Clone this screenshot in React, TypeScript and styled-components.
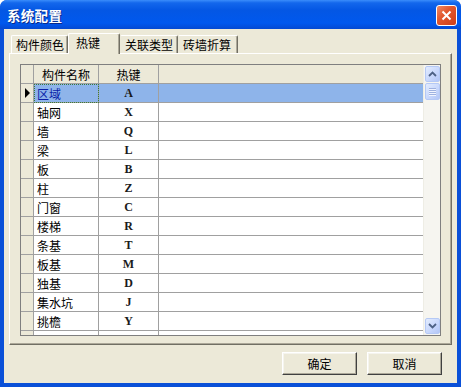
import React from 'react';
import styled, { createGlobalStyle } from 'styled-components';

const GlobalStyle = createGlobalStyle`
  html, body {
    margin: 0;
    padding: 0;
    background: #ffffff;
  }
  body {
    font-family: "Noto Sans CJK SC", "Liberation Sans", sans-serif;
    font-size: 12px;
  }
`;

const Window = styled.div`
  width: 461px;
  height: 387px;
  box-sizing: border-box;
  display: flex;
  flex-direction: column;
  background: #0a50d8;
  border-radius: 7px 7px 0 0;
  overflow: hidden;
`;

const TitleBar = styled.div`
  height: 29px;
  flex: none;
  display: flex;
  align-items: center;
  justify-content: space-between;
  padding: 0 4px 0 7px;
  background: linear-gradient(
    to bottom,
    #3a8dfb 0%,
    #1367ec 10%,
    #0457e4 35%,
    #0058ee 80%,
    #0449d2 100%
  );
`;

const Title = styled.span`
  color: #ffffff;
  font-weight: bold;
  font-size: 13.5px;
  letter-spacing: 0.3px;
  text-shadow: 1px 1px 0 #0a2a8a;
`;

const CloseButton = styled.div`
  width: 21px;
  height: 21px;
  box-sizing: border-box;
  border: 1px solid #ffffff;
  border-radius: 3px;
  background: linear-gradient(135deg, #f08a64 0%, #e2582f 40%, #cf3d17 100%);
  display: flex;
  align-items: center;
  justify-content: center;
  margin-top: 1px;
`;

const Client = styled.div`
  flex: 1;
  margin: 0 4px 4px;
  background: #ece9d8;
  display: flex;
  flex-direction: column;
  padding: 4px 5px 0;
  min-height: 0;
`;

const TabStrip = styled.div`
  height: 20px;
  flex: none;
  display: flex;
  align-items: flex-end;
  padding-left: 2px;
  position: relative;
  z-index: 1;
`;

const Tab = styled.div<{ $active?: boolean; $width: number }>`
  box-sizing: border-box;
  width: ${(p) => p.$width}px;
  height: ${(p) => (p.$active ? '21px' : '18px')};
  margin-bottom: ${(p) => (p.$active ? '-1px' : '0')};
  padding: ${(p) => (p.$active ? '1px 0 0 7px' : '1px 0 0 4px')};
  background: #ece9d8;
  border-top: 1px solid #ffffff;
  border-left: 1px solid ${(p) => (p.$active ? '#ffffff' : '#ece9d8')};
  border-right: 1px solid #716f64;
  box-shadow: inset -1px 0 0 #aca899;
  border-radius: 2px 2px 0 0;
  color: #000000;
  font-size: 12px;
  line-height: 15px;
  white-space: nowrap;
  &:first-child {
    border-left-color: #ffffff;
  }
`;

const Panel = styled.div`
  height: 292px;
  flex: none;
  box-sizing: border-box;
  border-top: 1px solid #ffffff;
  border-left: 1px solid #ffffff;
  border-right: 1px solid #716f64;
  border-bottom: 1px solid #716f64;
  box-shadow: inset -1px -1px 0 #aca899;
  padding: 10px 10px 8px 10px;
  display: flex;
`;

const Grid = styled.div`
  flex: 1;
  box-sizing: border-box;
  border: 1px solid #7f7f7f;
  display: flex;
  background: #ffffff;
  overflow: hidden;
`;

const Table = styled.div`
  flex: 1;
  min-width: 0;
  overflow: hidden;
`;

const Row = styled.div<{ $selected?: boolean }>`
  display: grid;
  grid-template-columns: 13px 65px 60px 1fr;
  height: 19px;
  background: ${(p) => (p.$selected ? '#8eb4ea' : '#ffffff')};
`;

const HeaderRow = styled(Row)`
  background: #ece9d8;
`;

const Cell = styled.div<{ $center?: boolean; $head?: boolean }>`
  box-sizing: border-box;
  border-right: 1px solid #a0a0a0;
  border-bottom: 1px solid #a0a0a0;
  display: flex;
  align-items: center;
  justify-content: ${(p) => (p.$center ? 'center' : 'flex-start')};
  padding-left: ${(p) => (p.$center ? '0' : '3px')};
  font-size: 12px;
  color: #000000;
  white-space: nowrap;
  overflow: hidden;
  background: ${(p) => (p.$head ? '#ece9d8' : 'transparent')};
  &:last-child {
    border-right: none;
  }
`;

const Indicator = styled(Cell)`
  background: #ece9d8;
  padding: 0;
  justify-content: center;
`;

const FocusCell = styled(Cell)`
  color: #0a1fa8;
  outline: 1px dotted #3a7a3a;
  outline-offset: -1px;
`;

const KeyText = styled.span`
  font-family: "Liberation Serif", "DejaVu Serif", serif;
  font-size: 12px;
  font-weight: 600;
  color: #1a1a1a;
`;

const ScrollBar = styled.div`
  width: 17px;
  flex: none;
  background: #f6f5f0;
  display: flex;
  flex-direction: column;
  justify-content: space-between;
  padding: 1px 0;
  box-sizing: border-box;
  border-left: 1px solid #eeede5;
`;

const ScrollTop = styled.div`
  display: flex;
  flex-direction: column;
`;

const ScrollButton = styled.div`
  width: 15px;
  height: 16px;
  box-sizing: border-box;
  margin-left: 1px;
  border: 1px solid #b5c9f5;
  border-radius: 2px;
  background: linear-gradient(135deg, #e3ecfe 0%, #c6d6fc 60%, #b3c6f5 100%);
  display: flex;
  align-items: center;
  justify-content: center;
`;

const Thumb = styled(ScrollButton)`
  height: 17px;
  margin-top: 1px;
  flex-direction: column;
  gap: 1px;
`;

const Grip = styled.div`
  width: 7px;
  height: 1px;
  background: #9fb2e0;
  box-shadow: 0 1px 0 #f0f4ff;
`;

const Footer = styled.div`
  flex: 1;
  display: flex;
  justify-content: flex-end;
  align-items: flex-start;
  padding: 7px 10px 0 0;
  gap: 10px;
`;

const Button = styled.button`
  width: 75px;
  height: 23px;
  box-sizing: border-box;
  background: #ece9d8;
  border: 1px solid;
  border-color: #ffffff #404040 #404040 #ffffff;
  box-shadow: inset -1px -1px 0 #aca899, inset 1px 1px 0 #f5f4ee;
  font-family: "Noto Sans CJK SC", "Liberation Sans", sans-serif;
  font-size: 12px;
  color: #000000;
  padding: 0;
  line-height: 20px;
`;

const tabs: { label: string; width: number; active?: boolean }[] = [
  { label: '构件颜色', width: 57 },
  { label: '热键', width: 52, active: true },
  { label: '关联类型', width: 58 },
  { label: '砖墙折算', width: 60 },
];

const rows: [string, string][] = [
  ['区域', 'A'],
  ['轴网', 'X'],
  ['墙', 'Q'],
  ['梁', 'L'],
  ['板', 'B'],
  ['柱', 'Z'],
  ['门窗', 'C'],
  ['楼梯', 'R'],
  ['条基', 'T'],
  ['板基', 'M'],
  ['独基', 'D'],
  ['集水坑', 'J'],
  ['挑檐', 'Y'],
  ['', ''],
];

const Chevron = ({ up }: { up?: boolean }) => (
  <svg width="9" height="6" viewBox="0 0 9 6">
    <path
      d={up ? 'M1 5 L4.5 1.5 L8 5' : 'M1 1 L4.5 4.5 L8 1'}
      fill="none"
      stroke="#4d6185"
      strokeWidth="1.8"
    />
  </svg>
);

const App: React.FC = () => {
  return (
    <>
      <GlobalStyle />
      <Window>
        <TitleBar>
          <Title>系统配置</Title>
          <CloseButton>
            <svg width="11" height="11" viewBox="0 0 11 11">
              <path d="M1.5 1.5 L9.5 9.5 M9.5 1.5 L1.5 9.5" stroke="#ffffff" strokeWidth="2" />
            </svg>
          </CloseButton>
        </TitleBar>
        <Client>
          <TabStrip>
            {tabs.map((t) => (
              <Tab key={t.label} $active={t.active} $width={t.width}>
                {t.label}
              </Tab>
            ))}
          </TabStrip>
          <Panel>
            <Grid>
              <Table>
                <HeaderRow>
                  <Indicator />
                  <Cell $center $head>构件名称</Cell>
                  <Cell $center $head>热键</Cell>
                  <Cell $head />
                </HeaderRow>
                {rows.map(([name, key], i) => (
                  <Row key={i} $selected={i === 0}>
                    <Indicator>
                      {i === 0 && (
                        <svg width="6" height="10" viewBox="0 0 6 10">
                          <path d="M1 0 L6 5 L1 10 Z" fill="#000000" />
                        </svg>
                      )}
                    </Indicator>
                    {i === 0 ? <FocusCell>{name}</FocusCell> : <Cell>{name}</Cell>}
                    <Cell $center>
                      <KeyText>{key}</KeyText>
                    </Cell>
                    <Cell />
                  </Row>
                ))}
              </Table>
              <ScrollBar>
                <ScrollTop>
                  <ScrollButton>
                    <Chevron up />
                  </ScrollButton>
                  <Thumb>
                    <Grip />
                    <Grip />
                    <Grip />
                    <Grip />
                  </Thumb>
                </ScrollTop>
                <ScrollButton>
                  <Chevron />
                </ScrollButton>
              </ScrollBar>
            </Grid>
          </Panel>
          <Footer>
            <Button>确定</Button>
            <Button>取消</Button>
          </Footer>
        </Client>
      </Window>
    </>
  );
};

export default App;
